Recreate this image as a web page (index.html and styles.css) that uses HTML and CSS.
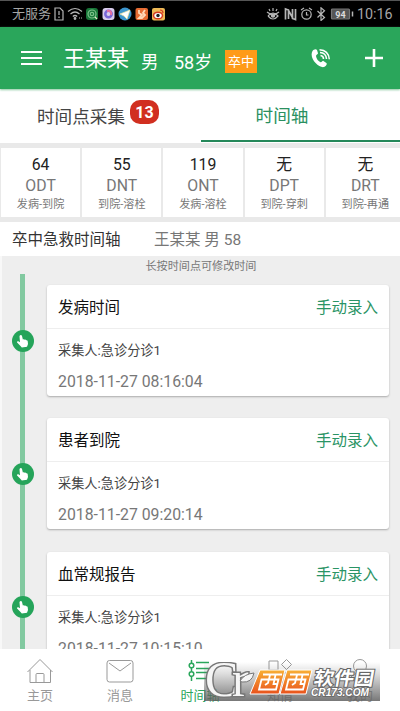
FILE: index.html
```html
<!DOCTYPE html>
<html lang="zh-CN">
<head>
<meta charset="utf-8">
<title>时间轴</title>
<link rel="stylesheet" href="styles.css">
</head>
<body>
<svg class="defs" width="0" height="0">
  <symbol id="hand" viewBox="0 0 22 22"><path fill="#fff" d="M8.300 5.200c.8-.4 1.500.1 1.700.9l.9 3.300c.7-.4 1.400-.2 1.700.3.700-.3 1.300 0 1.600.5.800-.2 1.400.3 1.500 1l.3 2.800-1 2.800-5.200.6-1.300-1.500-3.400-3.300c-.5-.8.200-1.700 1.200-1.300l1.700 1L7.500 6.500c-.1-.6.200-1.100.8-1.300z"/></symbol>
</svg>
<div class="app">
  <div class="status">
    <span class="carrier">无服务</span>
    <svg class="left-icons" width="112" height="14" viewBox="0 0 112 14" fill="none" stroke="#b5b5b5" stroke-width="1.2">
      <path d="M1 1h5l3 3v9H1zM5 4v4M5 9.5v1.5"/>
      <path d="M14 4.500q7-6 14 0M16.500 7q4.500-4 9 0M18.800 9.500q2.200-2 4.400 0"/><circle cx="21" cy="11.500" r=".8" fill="#b5b5b5"/><path d="M25 11h3" stroke-dasharray="1 1"/>
      <rect x="32" y="1" width="12" height="12" rx="3" fill="#187638" stroke="none"/><circle cx="38" cy="7" r="4" stroke="#7bc18a"/><circle cx="38" cy="7" r="1.700" stroke="#7bc18a"/><path d="M41 10l2 2" stroke="#e4e9c8"/>
      <rect x="48.500" y="1" width="12" height="12" rx="3" fill="#d9cdeb" stroke="none"/><circle cx="54.500" cy="7" r="3.200" stroke="#7867d7" stroke-width="2.500"/><path d="M53 4q5-1 4 4" stroke="#e66fa0" stroke-width="2"/>
      <circle cx="71" cy="7" r="6.500" fill="#3c95cd" stroke="none"/><path d="M66 7l10-4-3 9-3-3z" fill="#fff" stroke="#f2e5a1" stroke-width=".7"/>
      <rect x="81.500" y="1" width="12.500" height="12" rx="2" fill="#e56b32" stroke="none"/><path d="M85 3v3l3 2-3 3h3l3-3-2-2 2-3" stroke="#ffd9b9" stroke-width="1.800"/>
      <rect x="98" y="1" width="13" height="12.500" rx="2" fill="#edb956" stroke="none"/><ellipse cx="104" cy="8.500" rx="4.500" ry="3.300" fill="#fff" stroke="#d53b24" stroke-width="1.500"/><circle cx="104" cy="8.500" r="1.700" fill="#222" stroke="none"/><path d="M106 3q3 0 3 3" stroke="#d53b24"/>
    </svg>
    <svg class="right-icons" width="90" height="14" viewBox="0 0 90 14" fill="none" stroke="#b5b5b5" stroke-width="1.200">
      <path d="M1 5q6 5 12 0M2 9q5-6 10 0q-5 6-10 0M7 1v3M3 2l1 2M11 2l-1 2"/><circle cx="7" cy="8.500" r="1.700" fill="#b5b5b5"/>
      <path d="M19.500 12.500V2l3 1v9M29.500 2v10.500l-3-1V2M22 2.500l5 9" stroke-width="1.700"/>
      <circle cx="40.500" cy="7.500" r="4.700"/><path d="M40.500 5v3h2M35 3l3-2M46 3l-3-2"/>
      <path d="M51.500 4l7 6.500L55 13.500V.8l3.500 3L51.500 10.500"/>
      <rect x="65.500" y="2" width="18" height="10" rx="1" fill="#555" stroke="#777"/><path d="M86.500 4.500v5" stroke-width="1.500"/>
      <text class="battery" x="74.500" y="10.500">94</text>
    </svg>
    <span class="clock">10:16</span>
  </div>
  <header class="header">
    <svg class="menu" width="22" height="16" viewBox="0 0 22 16"><path d="M0 2h21M0 8h21M0 14h21" stroke="#fff" stroke-width="2"/></svg>
    <span class="name">王某某</span><span class="sex">男</span><span class="age">58岁</span><span class="tag">卒中</span>
    <svg class="phone" width="20" height="21" viewBox="0 0 20 21"><path fill="#fff" d="M1.500 3C2.500 1.500 5 .6 6 2l1 3.200c.2 1-2 1.800-2 2.800.3 2.800 2.500 5.500 4.600 6.200 1.200.2 1.700-1.600 2.800-1.300l3 2c1.200 1-.7 3.600-2.400 4.100C8 20.400-2.500 10.500 1.500 3z"/><path fill="none" stroke="#fff" stroke-width="1.500" d="M9.500 7.500q3 .3 3 3.500M9 4.500q6 .3 6.500 6.500M8.500 1.700q9 .4 9.800 9.500"/></svg>
    <svg class="plus" width="20" height="20" viewBox="0 0 20 20"><path d="M10 1v18M1 10h18" stroke="#fff" stroke-width="2.600"/></svg>
  </header>
  <nav class="tabs">
    <div class="tab"><span>时间点采集</span><b class="count">13</b></div>
    <div class="tab active"><span>时间轴</span></div>
  </nav>
  <section class="stats">
    <div class="stat"><b>64</b><span>ODT</span><small>发病-到院</small></div>
    <div class="stat"><b>55</b><span>DNT</span><small>到院-溶栓</small></div>
    <div class="stat"><b>119</b><span>ONT</span><small>发病-溶栓</small></div>
    <div class="stat"><b>无</b><span>DPT</span><small>到院-穿刺</small></div>
    <div class="stat"><b>无</b><span>DRT</span><small>到院-再通</small></div>
  </section>
  <div class="patient"><span class="heading">卒中急救时间轴</span><span class="who">王某某 男 58</span></div>
  <main class="timeline">
    <p class="hint">长按时间点可修改时间</p>
    <div class="track">
      <div class="entry">
        <div class="rail"><svg class="node" width="22" height="22"><use href="#hand"/></svg></div>
        <article class="card"><div class="card-head"><span>发病时间</span><a>手动录入</a></div><div class="by">采集人:急诊分诊1</div><div class="time">2018-11-27 08:16:04</div></article>
      </div>
      <div class="entry">
        <div class="rail"><svg class="node" width="22" height="22"><use href="#hand"/></svg></div>
        <article class="card"><div class="card-head"><span>患者到院</span><a>手动录入</a></div><div class="by">采集人:急诊分诊1</div><div class="time">2018-11-27 09:20:14</div></article>
      </div>
      <div class="entry">
        <div class="rail"><svg class="node" width="22" height="22"><use href="#hand"/></svg></div>
        <article class="card"><div class="card-head"><span>血常规报告</span><a>手动录入</a></div><div class="by">采集人:急诊分诊1</div><div class="time">2018-11-27 10:15:10</div></article>
      </div>
    </div>
  </main>
  <footer class="bottom">
    <div class="item"><svg width="28" height="26" viewBox="0 0 28 26"><path d="M1.500 14L14 1.500 26.500 14M4 12v12.500h20.500V12M10 24.500v-8q0-1 1-1h6q1 0 1 1v8"/></svg><span>主页</span></div>
    <div class="item"><svg width="28" height="26" viewBox="0 0 28 26"><rect x="1" y="2.500" width="26" height="21.500" rx="2.500"/><path d="M3 5l11 8L25 5"/></svg><span>消息</span></div>
    <div class="item on"><svg width="28" height="26" viewBox="0 0 28 26"><path d="M5.500 2v3M5.500 10v3M5.500 18v5"/><circle cx="5.500" cy="7.500" r="2.300"/><circle cx="5.500" cy="16" r="2.300"/><path d="M10 4.500h13M10 10.500h13M10 14.500h13M10 20.500h13"/></svg><span>时间轴</span></div>
    <div class="item"><svg width="28" height="26" viewBox="0 0 28 26"><path d="M3 3h9v9H3zM3 15h9v9H3zM15 15h9v9h-9zM20.500 1.500l5 5-5 5-5-5z"/></svg><span>知情</span></div>
    <div class="item"><svg width="28" height="26" viewBox="0 0 28 26"><circle cx="14" cy="8" r="6.500"/><path d="M3 25q1-10 11-10t11 10"/></svg><span>我的</span></div>
  </footer>
  <svg class="watermark" width="176" height="42" viewBox="0 0 176 42">
    <defs>
      <linearGradient id="shade" x2="0" y2="1"><stop offset="0" stop-color="#666" stop-opacity="0"/><stop offset=".3" stop-color="#666" stop-opacity=".22"/><stop offset="1" stop-color="#606060" stop-opacity=".85"/></linearGradient>
      <linearGradient id="orange" x2="0" y2="1"><stop offset="0" stop-color="#f8b035"/><stop offset="1" stop-color="#e9521c"/></linearGradient>
    </defs>
    <rect width="176" height="39" fill="url(#shade)"/>
    <text class="wm-logo" x="1" y="34">C<tspan x="28">r</tspan></text>
    <path d="M36 19q4-7 14-8q-2 10-12 9z" fill="#f5f5f5" stroke="#777"/>
    <g fill="url(#orange)" stroke="#fff" stroke-width="1"><path d="M56 8h25L75 32H46z"/><path d="M83 8h25L102 32H76z"/></g>
    <g fill="none" stroke="#fff" stroke-width="1.800"><path d="M59 12.500h19M57.500 17.500h17l-2.500 10H55zM66 13l-2 8-3 2M71.500 13l-2 9h3M86 12.500h19M84.500 17.500h17l-2.500 10H82zM93 13l-2 8-3 2M98.500 13l-2 9h3"/></g>
    <text class="wm-cn" transform="translate(109 22.500) skewX(-10)" textLength="60" lengthAdjust="spacingAndGlyphs">软件园</text>
    <text class="wm-en" x="107" y="33.500" textLength="58" lengthAdjust="spacingAndGlyphs">CR173.COM</text>
  </svg>
</div>
</body>
</html>
```
FILE: styles.css
```css
* { box-sizing: border-box; }
body { margin: 0; font-family: Roboto, "Noto Sans CJK SC", sans-serif; color: #333; background: #fff; }
.defs { position: absolute; }
.app { position: relative; width: 400px; height: 711px; overflow: hidden; display: flex; flex-direction: column; }
.app > * { flex-shrink: 0; }
span, b, small, a { white-space: nowrap; }

.status { height: 27px; background: #000; border-top: 1px solid #555; display: flex; align-items: center; padding: 0 8px 0 12px; color: #a5a5a5; }
.carrier { font-size: 13px; line-height: 20px; width: 41px; }
.left-icons { margin-left: 1px; }
.right-icons { margin-left: auto; margin-right: 1px; }
.battery { font-size: 9px; font-weight: bold; fill: #ddd; stroke: none; text-anchor: middle; }
.clock { font-size: 14.3px; width: 35px; text-align: right; }

.header { height: 62px; background: #2aa65b; color: #fff; display: flex; align-items: center; padding-left: 21px; position: relative; box-shadow: 0 1px 2px #8bc9a2; z-index: 1; }
.header .name { font-size: 22px; line-height: 30px; margin: 2px 0 0 20px; width: 78px; }
.header .sex { font-size: 17.5px; margin-top: 5px; width: 33px; }
.header .age { font-size: 18px; margin-top: 5px; width: 51px; }
.tag { width: 32px; height: 23px; line-height: 24px; margin-top: 7px; background: #ff9b18; font-size: 13px; text-align: center; }
.phone { margin-left: 54px; }
.plus { margin-left: 33px; }

.tabs { height: 54px; display: flex; font-size: 17.6px; color: #444; }
.tab { width: 50%; height: 54px; display: flex; justify-content: center; align-items: center; line-height: 26px; padding-top: 1px; }
.tab:first-child { padding-right: 4px; }
.tab .count { width: 29px; height: 24px; line-height: 25px; border-radius: 10px; background: #d12f20; color: #fff; font-size: 16px; text-align: center; margin: 0 0 9px 5px; }
.tab.active { color: #2a9060; border-bottom: 2px solid #25885a; height: 53px; width: 199px; margin-left: 1px; padding-top: 3px; padding-right: 37px; }

.stats { height: 79px; padding: 5px 0 5px 1px; background: #e9e9e9; display: flex; gap: 2px; overflow: hidden; }
.stat { background: #fff; flex: 0 0 79.200px; display: flex; flex-direction: column; align-items: center; color: #777; }
.stat b { font-weight: 400; font-size: 15.8px; line-height: 20px; margin-top: 7px; color: #222; }
.stat span { font-size: 15.8px; line-height: 20px; margin-top: 1px; }
.stat small { font-size: 11.100px; line-height: 16px; margin-top: 1px; }

.patient { height: 34px; display: flex; align-items: center; padding: 2px 12px 0 12px; font-size: 15.5px; line-height: 24px; }
.heading { width: 142px; color: #333; }
.who { color: #777; }

.timeline { height: 393px; background: #eee; overflow: hidden; border-left: 2px solid #f8f8f8; }
.hint { margin: 0; height: 18px; line-height: 22px; font-size: 11.100px; text-align: center; color: #777; }
.entry { display: flex; height: 133.400px; }
.rail { width: 45px; display: flex; justify-content: center; align-items: center; padding-right: 4px; background: linear-gradient(#82c9a0, #82c9a0) 18px 0 / 5px 100% no-repeat; }
.node { background: #25a45a; border-radius: 50%; flex: none; }
.card { width: 342px; height: 111px; margin-top: 11px; background: #fff; border-radius: 3px; box-shadow: 0 1px 2px #aaa; }
.card-head { height: 44px; border-bottom: 1px solid #eee; padding: 3px 11px 0; display: flex; justify-content: space-between; align-items: center; font-size: 15.500px; color: #111; line-height: 24px; }
.card-head a { color: #2a9465; }
.by { padding-left: 11px; margin-top: 12px; font-size: 13.200px; line-height: 20px; color: #444; }
.time { padding-left: 11px; margin-top: 11px; font-size: 15.800px; line-height: 20px; color: #777; }

.bottom { height: 62px; background: #fff; display: flex; position: relative; }
.item { width: 80px; padding-top: 9px; display: flex; flex-direction: column; align-items: center; font-size: 13px; line-height: 18px; color: #999; }
.item svg { fill: none; stroke: #999; stroke-width: 1; }
.item span { margin-top: 3px; }
.item.on { color: #2aa65b; }
.item.on svg { stroke: #2aa65b; stroke-width: 1.500; }

.watermark { position: absolute; left: 204px; top: 662px; }
.wm-logo { font: 50px "Liberation Serif", serif; fill: #f5f5f5; stroke: #777; stroke-width: 3px; paint-order: stroke; }
.wm-cn { font: 700 19px "Noto Sans CJK SC", sans-serif; fill: #fff; stroke: #666; stroke-width: 2px; paint-order: stroke; }
.wm-en { font: italic bold 10px "Liberation Sans", sans-serif; fill: #fff; stroke: #666; stroke-width: 1.500px; paint-order: stroke; }
```
